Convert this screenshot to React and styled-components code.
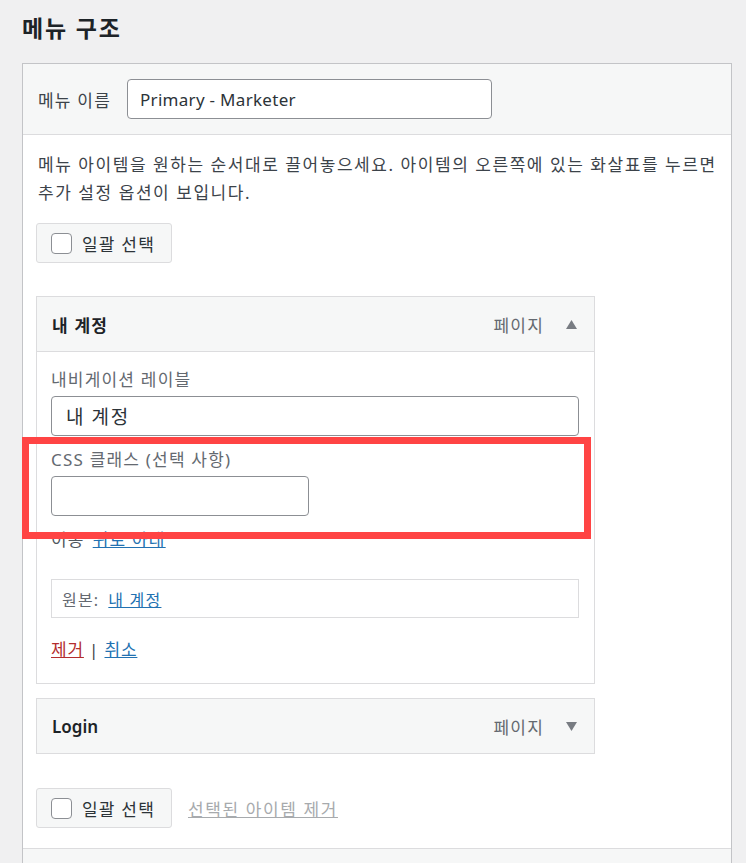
import React from "react";
import styled, { createGlobalStyle } from "styled-components";

const GlobalStyle = createGlobalStyle`
  body {
    margin: 0;
    background: #f0f0f1;
    font-family: "Noto Sans", "Noto Sans CJK KR", sans-serif;
    color: #3c434a;
    letter-spacing: 1.2px;
  }
`;

const PageUI = styled.div`
  position: relative;
  padding: 0 14px 0 22px;
  height: 863px;
  overflow: hidden;
`;

const TitleUI = styled.h2`
  margin: 0;
  padding: 10px 0 17px;
  font: 700 23px/36px "Noto Sans", "Noto Sans CJK KR", sans-serif;
  letter-spacing: 1.8px;
  color: #1d2327;
`;

const PanelUI = styled.div`
  width: 708px;
  border: 1px solid #c3c4c7;
  background: #fff;
`;

const PanelHeadUI = styled.div`
  display: flex;
  align-items: center;
  gap: 16px;
  height: 70px;
  padding: 0 15px;
  background: #f6f7f7;
  border-bottom: 1px solid #dcdcde;
  font-size: 17px;
`;

const InputUI = styled.input`
  box-sizing: border-box;
  width: ${(p) => p.$width}px;
  height: 40px;
  padding: 0 ${(p) => (p.$big ? 14 : 12)}px;
  border: 1px solid #8c8f94;
  border-radius: 4px;
  background: #fff;
  font: ${(p) => (p.$big ? "19px" : "17px")} "Noto Sans", "Noto Sans CJK KR", sans-serif;
  letter-spacing: ${(p) => (p.$big ? "1.6px" : "0.3px")};
  color: #2c3338;
  outline: none;
`;

const PanelBodyUI = styled.div`
  padding: 16px 13px 20px;
`;

const HelpUI = styled.p`
  margin: 0 -12px 16px 0;
  padding-left: 2px;
  font-size: 17px;
  line-height: 28px;
  letter-spacing: 1.55px;
`;

const BulkRowUI = styled.div`
  display: flex;
  align-items: center;
  gap: 16px;
  margin-top: ${(p) => p.$top || 0}px;
`;

const BulkBoxUI = styled.label`
  box-sizing: border-box;
  display: flex;
  align-items: center;
  gap: 10px;
  height: 40px;
  padding: 0 16px 0 14px;
  background: #f6f7f7;
  border: 1px solid #dcdcde;
  border-radius: 3px;
  font-size: 17px;
  color: #2c3338;
`;

const CheckUI = styled.span`
  box-sizing: border-box;
  width: 21px;
  height: 21px;
  border: 1px solid #8c8f94;
  border-radius: 4px;
  background: #fff;
`;

const FadedLinkUI = styled.a`
  font-size: 17px;
  letter-spacing: 1.6px;
  color: #a7aaad;
  text-decoration: underline;
`;

const ItemUI = styled.div`
  width: 559px;
  margin-top: ${(p) => p.$top || 0}px;
`;

const ItemBarUI = styled.div`
  box-sizing: border-box;
  display: flex;
  align-items: center;
  height: 56px;
  padding: 0 17px 0 15px;
  background: #f6f7f7;
  border: 1px solid #dcdcde;
  font-size: 17px;
`;

const ItemTitleUI = styled.span`
  flex: 1;
  font-weight: ${(p) => (p.$latin ? 600 : 700)};
  letter-spacing: ${(p) => (p.$latin ? "0" : "1.2px")};
  color: #1d2327;
`;

const ItemTypeUI = styled.span`
  color: #646970;
  margin-right: 22px;
`;

const ItemSettingsUI = styled.div`
  padding: 16px 15px 21px 14px;
  border: 1px solid #dcdcde;
  border-top: none;
  font-size: 17px;
`;

const FieldLabelUI = styled.div`
  line-height: 24px;
  color: #646970;
  margin: ${(p) => p.$top || 0}px 0 4px;
`;

const MoveRowUI = styled.div`
  margin-top: 12px;
  line-height: 24px;
  color: #50575e;
  > a {
    margin-left: 8px;
  }
`;

const LinkUI = styled.a`
  color: ${(p) => (p.$danger ? "#b32d2e" : "#2271b1")};
  text-decoration: underline;
`;

const OriginalUI = styled.div`
  box-sizing: border-box;
  display: flex;
  align-items: center;
  gap: 9px;
  height: 39px;
  margin-top: 27px;
  padding: 0 10px;
  border: 1px solid #dcdcde;
  font-size: 16px;
  color: #646970;
`;

const ActionsUI = styled.div`
  margin-top: 20px;
  line-height: 24px;
  letter-spacing: 0.8px;
  color: #3c434a;
`;

const FooterUI = styled.div`
  display: flex;
  justify-content: flex-end;
  padding: 15px 14px 0;
  background: #f6f7f7;
  border-top: 1px solid #dcdcde;
  height: 60px;
`;

const SaveButtonUI = styled.button`
  width: 108px;
  height: 40px;
  background: #2271b1;
  border: 1px solid #2271b1;
  border-radius: 3px;
`;

const HighlightUI = styled.div`
  position: absolute;
  left: 22px;
  top: 437px;
  width: 555px;
  height: 88px;
  border: 7px solid #ff4444;
`;

const Arrow = ({ up }) => (
  <svg width="11" height="9" viewBox="0 0 11 9">
    <path d={up ? "M5.5 0 L11 9 L0 9 Z" : "M0 0 L11 0 L5.5 9 Z"} fill="#787c82" />
  </svg>
);

const BulkSelect = () => (
  <BulkBoxUI>
    <CheckUI />
    일괄 선택
  </BulkBoxUI>
);

const App = () => (
  <PageUI>
    <GlobalStyle />
    <TitleUI>메뉴 구조</TitleUI>
    <PanelUI>
      <PanelHeadUI>
        메뉴 이름
        <InputUI $width={365} defaultValue="Primary - Marketer" />
      </PanelHeadUI>
      <PanelBodyUI>
        <HelpUI>
          메뉴 아이템을 원하는 순서대로 끌어놓으세요. 아이템의 오른쪽에 있는 화살표를 누르면
          <br />
          추가 설정 옵션이 보입니다.
        </HelpUI>
        <BulkRowUI>
          <BulkSelect />
        </BulkRowUI>

        <ItemUI $top={33}>
          <ItemBarUI>
            <ItemTitleUI>내 계정</ItemTitleUI>
            <ItemTypeUI>페이지</ItemTypeUI>
            <Arrow up />
          </ItemBarUI>
          <ItemSettingsUI>
            <FieldLabelUI>내비게이션 레이블</FieldLabelUI>
            <InputUI $width={528} $big defaultValue="내 계정" />
            <FieldLabelUI $top={12}>CSS 클래스 (선택 사항)</FieldLabelUI>
            <InputUI $width={258} />
            <MoveRowUI>
              이동
              <LinkUI href="#">위로 아래</LinkUI>
            </MoveRowUI>
            <OriginalUI>
              원본:
              <LinkUI href="#">내 계정</LinkUI>
            </OriginalUI>
            <ActionsUI>
              <LinkUI $danger href="#">제거</LinkUI> | <LinkUI href="#">취소</LinkUI>
            </ActionsUI>
          </ItemSettingsUI>
        </ItemUI>

        <ItemUI $top={14}>
          <ItemBarUI>
            <ItemTitleUI $latin>Login</ItemTitleUI>
            <ItemTypeUI>페이지</ItemTypeUI>
            <Arrow />
          </ItemBarUI>
        </ItemUI>

        <BulkRowUI $top={34}>
          <BulkSelect />
          <FadedLinkUI href="#">선택된 아이템 제거</FadedLinkUI>
        </BulkRowUI>
      </PanelBodyUI>
      <FooterUI>
        <SaveButtonUI />
      </FooterUI>
    </PanelUI>
    <HighlightUI />
  </PageUI>
);

export default App;
